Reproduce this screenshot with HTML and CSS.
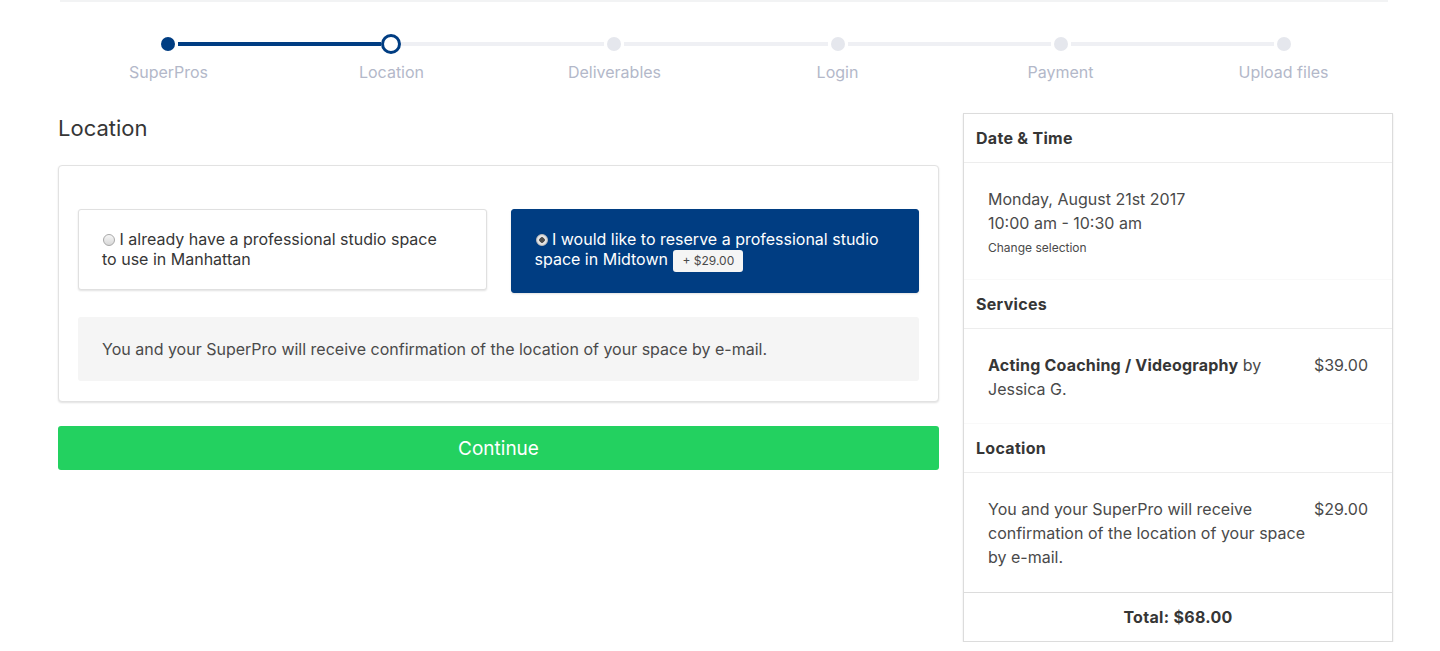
FILE: index.html
```html
<!DOCTYPE html>
<html lang="en">
<head>
<meta charset="utf-8">
<title>Location</title>
<link rel="stylesheet" href="styles.css">
</head>
<body>
<div class="topline"></div>

<div class="stepper">
  <div class="track">
    <span class="node"><span class="dot done"></span></span>
    <span class="seg active"></span>
    <span class="node"><span class="ring"></span></span>
    <span class="seg"></span>
    <span class="node"><span class="dot"></span></span>
    <span class="seg"></span>
    <span class="node"><span class="dot"></span></span>
    <span class="seg"></span>
    <span class="node"><span class="dot"></span></span>
    <span class="seg"></span>
    <span class="node"><span class="dot"></span></span>
  </div>
  <div class="labels">
    <span>SuperPros</span>
    <span>Location</span>
    <span>Deliverables</span>
    <span>Login</span>
    <span>Payment</span>
    <span>Upload files</span>
  </div>
</div>

<div class="layout">
  <main class="main">
    <h1 class="title">Location</h1>
    <div class="box">
      <div class="options">
        <div class="option">
          <span class="radio"></span> I already have a professional studio space<br>to use in Manhattan
        </div>
        <div class="option selected">
          <span class="radio checked"></span> I would like to reserve a professional studio<br>space in Midtown <span class="tag">+ $29.00</span>
        </div>
      </div>
      <div class="notification">You and your SuperPro will receive confirmation of the location of your space by e-mail.</div>
    </div>
    <button class="continue">Continue</button>
  </main>

  <aside class="summary">
    <div class="s-head">Date &amp; Time</div>
    <div class="s-body">
      <div>Monday, August 21st 2017</div>
      <div>10:00 am - 10:30 am</div>
      <div class="small">Change selection</div>
    </div>
    <div class="s-head">Services</div>
    <div class="s-body row">
      <div class="desc"><strong>Acting Coaching / Videography</strong> by Jessica G.</div>
      <div class="price">$39.00</div>
    </div>
    <div class="s-head">Location</div>
    <div class="s-body row last">
      <div class="desc">You and your SuperPro will receive confirmation of the location of your space by e-mail.</div>
      <div class="price">$29.00</div>
    </div>
    <div class="s-total">Total: $68.00</div>
  </aside>
</div>
</body>
</html>
```

FILE: styles.css
```css
* { box-sizing: border-box; }
html, body { margin: 0; padding: 0; background: #fff; }
body {
  font-family: Inter, "Noto Sans", "Liberation Sans", sans-serif;
  font-size: 16px;
  color: #4a4a4a;
}

.topline {
  margin-left: 60px;
  width: 1328px;
  height: 2px;
  background: #f2f3f4;
}

/* stepper */
.stepper {
  margin-left: 57px;
  width: 1338px;
  padding-top: 31px;
}
.track {
  display: flex;
  align-items: center;
  margin: 0 101px;
  height: 22px;
}
.node {
  width: 20px;
  height: 20px;
  display: flex;
  align-items: center;
  justify-content: center;
  flex: none;
}
.dot {
  width: 14px;
  height: 14px;
  border-radius: 50%;
  background: #e5e7ed;
}
.dot.done { background: #003d82; }
.ring {
  width: 20px;
  height: 20px;
  border-radius: 50%;
  border: 3px solid #003d82;
  background: #fff;
}
.seg {
  flex: 1;
  height: 4px;
  background: #eff0f4;
}
.seg.active { background: #003d82; }
.labels {
  display: grid;
  grid-template-columns: repeat(6, 1fr);
  margin-top: 6px;
  text-align: center;
  color: #b3b8c9;
  font-size: 16px;
  line-height: 22px;
}

/* layout */
.layout {
  display: flex;
  align-items: flex-start;
  gap: 24px;
  margin-left: 58px;
  margin-top: 30px;
}
.main { width: 881px; }
.title {
  margin: 0;
  font-size: 22px;
  font-weight: 400;
  line-height: 30px;
  color: #363636;
}
.box {
  margin-top: 22px;
  background: #fff;
  border: 1px solid #e2e2e2;
  border-radius: 4px;
  box-shadow: 0 1px 2px rgba(10, 10, 10, 0.12);
  padding: 43px 19px 20px;
}
.options {
  display: grid;
  grid-template-columns: 1fr 1fr;
  gap: 24px;
  align-items: start;
}
.option {
  border: 1px solid #e0e0e0;
  border-radius: 3px;
  box-shadow: 0 1px 2px rgba(10, 10, 10, 0.12);
  padding: 19px 23px 20px;
  line-height: 20px;
  color: #363636;
  background: #fff;
}
.option.selected {
  background: #003d82;
  border-color: #003d82;
  color: #fff;
}
.radio {
  display: inline-block;
  width: 12px;
  height: 12px;
  margin-left: 1px;
  border-radius: 50%;
  border: 1px solid #a8a8a8;
  background: linear-gradient(#f6f6f6, #d8d8d8);
  vertical-align: -1px;
}
.radio.checked {
  border-color: #bdbdbd;
  background: radial-gradient(circle, #4d4d4d 0, #4d4d4d 2.5px, #e8e8e8 3px, #d4d4d4 100%);
}
.tag {
  display: inline-block;
  background: #f5f5f5;
  color: #4a4a4a;
  font-size: 12px;
  line-height: 22px;
  padding: 0 9px;
  border-radius: 3px;
  margin-left: 1px;
}
.notification {
  margin-top: 24px;
  background: #f5f5f5;
  border-radius: 3px;
  padding: 20px 24px;
  line-height: 24px;
  color: #4a4a4a;
}
.continue {
  display: block;
  width: 100%;
  height: 44px;
  margin-top: 24px;
  border: 0;
  border-radius: 3px;
  background: #23d160;
  color: #fff;
  font-family: inherit;
  font-size: 19px;
  cursor: pointer;
}

/* summary */
.summary {
  width: 430px;
  border: 1px solid #dcdcdc;
  box-shadow: 0 1px 2px rgba(10, 10, 10, 0.1);
  background: #fff;
}
.s-head {
  padding: 12px 12px;
  line-height: 24px;
  font-weight: 700;
  letter-spacing: 0.3px;
  color: #363636;
  border-bottom: 1px solid #ededed;
}
.s-body {
  padding: 24px 24px 22px;
  line-height: 24px;
  color: #4a4a4a;
  border-bottom: 1px solid #f9f9f9;
}
.s-body.last {
  padding-bottom: 23px;
  border-bottom: 0;
}
.s-body .small {
  font-size: 12px;
  line-height: 18px;
  margin-top: 4px;
}
.s-body.row {
  display: flex;
  justify-content: space-between;
}
.desc { width: 322px; }
.desc strong { color: #363636; letter-spacing: 0.2px; }
.price { text-align: right; }
.s-total {
  border-top: 1px solid #dcdcdc;
  padding: 12px;
  line-height: 24px;
  text-align: center;
  font-weight: 700;
  letter-spacing: 0.3px;
  color: #363636;
}
```
